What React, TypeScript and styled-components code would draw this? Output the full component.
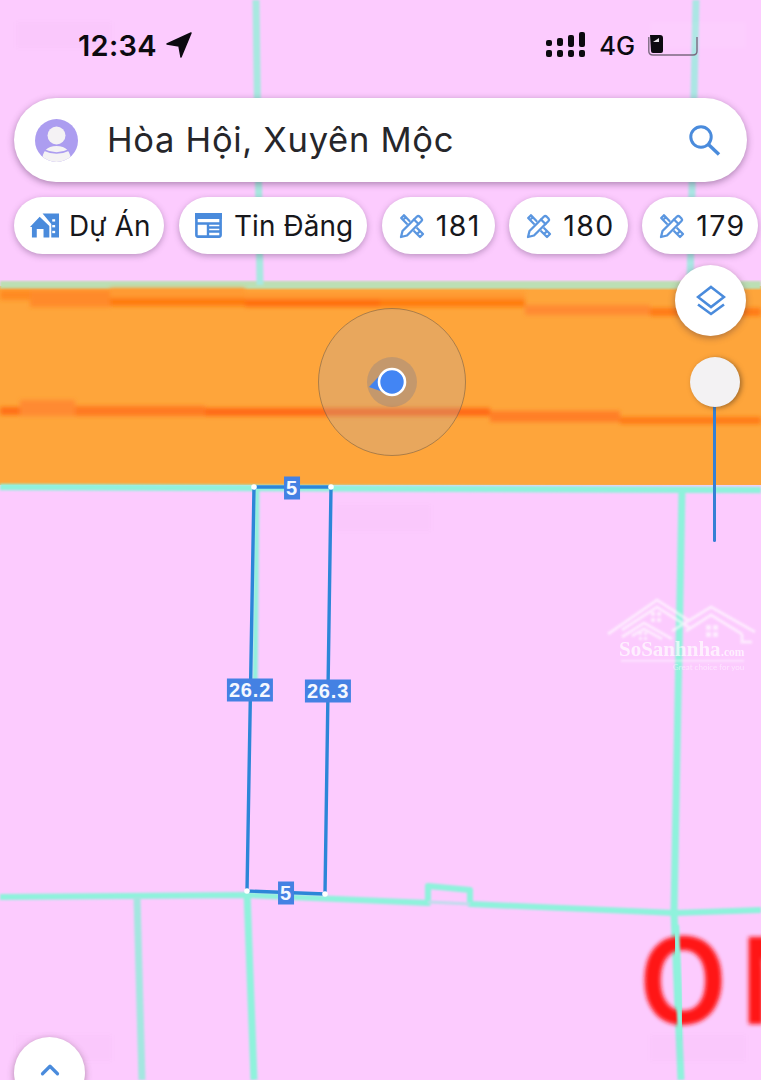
import * as React from 'react';
import styled, { createGlobalStyle } from 'styled-components';
import { ChevronUp } from 'lucide-react';

const BLUE = '#4a8bdc';
const TEAL = '#8ff2dc';

const GlobalStyle = createGlobalStyle`
  html, body {
    margin: 0;
    padding: 0;
    background: #fccbfe;
  }
  body {
    font-family: Inter, "Noto Sans", "Liberation Sans", sans-serif;
  }
`;

const Screen = styled.div`
  position: relative;
  width: 761px;
  height: 1080px;
  overflow: hidden;
  background: #fccbfe;
`;

const MapCanvas = styled.svg`
  position: absolute;
  top: 0;
  left: 0;
  width: 761px;
  height: 1080px;
`;

/** Header stack: status bar, search and chips, in flow above the map. */
const Header = styled.div`
  position: relative;
  display: flex;
  flex-direction: column;
  padding: 0 0 0 14px;
`;

const StatusBar = styled.div`
  display: flex;
  align-items: center;
  justify-content: space-between;
  height: 90px;
  padding: 0 63px 0 64px;
  color: #0c0a10;
`;

const StatusGroup = styled.div<{ $gap: number }>`
  display: flex;
  align-items: center;
  gap: ${props => props.$gap}px;
`;

const Clock = styled.span`
  font-size: 29px;
  font-weight: 600;
  letter-spacing: 0.3px;
`;

const Network = styled.span`
  font-size: 25.5px;
  font-weight: 500;
`;

const SearchBar = styled.div`
  display: flex;
  align-items: center;
  width: 733px;
  height: 84px;
  margin-top: 8px;
  padding: 0 26px 0 21px;
  box-sizing: border-box;
  border-radius: 42px;
  background: #fff;
  box-shadow: 0 2px 7px rgba(70, 40, 80, 0.45);
`;

const SearchText = styled.span`
  flex: 1;
  margin-left: 29px;
  font-size: 34.5px;
  line-height: 40px;
  color: #26262a;
  letter-spacing: 0.7px;
`;

const ChipRow = styled.div`
  display: flex;
  gap: 14.5px;
  margin-top: 15px;
`;

const Chip = styled.div`
  display: flex;
  align-items: center;
  flex: none;
  gap: 10px;
  height: 57px;
  padding: 0 14px 0 16px;
  box-sizing: border-box;
  border-radius: 29px;
  background: #fff;
  color: #17171b;
  font-size: 27.9px;
  letter-spacing: 0.1px;
  box-shadow: 0 2px 6px rgba(70, 40, 80, 0.35);
`;

const WideChip = styled(Chip)`
  gap: 12px;
`;

const ToolChip = styled(Chip)`
  gap: 11px;
  padding: 0 13px 0 17px;
`;

const ChipNumber = styled.span`
  min-width: 46px;
  font-size: 28.5px;
  letter-spacing: 1.4px;
`;

const RoundButton = styled.div<{ $left: number; $top: number }>`
  position: absolute;
  left: ${props => props.$left}px;
  top: ${props => props.$top}px;
  display: flex;
  align-items: center;
  justify-content: center;
  width: 71px;
  height: 71px;
  border-radius: 50%;
  background: #fff;
  box-shadow: 0 2px 7px rgba(80, 50, 60, 0.45);
`;

const SliderTrack = styled.div`
  position: absolute;
  left: 713px;
  top: 400px;
  width: 3px;
  height: 142px;
  border-radius: 2px;
  background: #3580d4;
`;

const SliderKnob = styled.div`
  position: absolute;
  left: 690px;
  top: 357px;
  width: 50px;
  height: 50px;
  border-radius: 50%;
  background: #f3f2f3;
  box-shadow: 2px 1px 5px rgba(90, 60, 30, 0.55);
`;

/** Length tag on a parcel edge, centred on its map point. */
const EdgeLabel = styled.div<{ $x: number; $y: number }>`
  position: absolute;
  left: ${props => props.$x}px;
  top: ${props => props.$y}px;
  transform: translate(-50%, -50%);
  height: 23px;
  padding: 0 2px;
  background: #4481e3;
  color: #f4f8ff;
  font-size: 20px;
  line-height: 23px;
  font-weight: 700;
  font-family: "Liberation Sans", sans-serif;
  letter-spacing: 0.8px;
`;

const Smudge = styled.div<{ $x: number; $y: number; $light?: boolean }>`
  position: absolute;
  left: ${props => props.$x}px;
  top: ${props => props.$y}px;
  width: 96px;
  height: 26px;
  background: ${props => (props.$light ? 'rgba(255,255,255,0.07)' : 'rgba(170,90,170,0.025)')};
  filter: blur(2px);
`;

const WatermarkText = styled.text<{ $serif?: boolean }>`
  fill: #fff;
  font-family: ${props => (props.$serif ? '"Liberation Serif", serif' : 'Lato, sans-serif')};
  font-weight: ${props => (props.$serif ? 700 : 400)};
`;

const BigText = styled.text`
  fill: #ff1418;
  font-family: "Liberation Sans", sans-serif;
  font-weight: 700;
  font-size: 126px;
  letter-spacing: 17px;
`;

const teal = { fill: 'none', stroke: TEAL, strokeLinejoin: 'round' as const };

const MapDrawing: React.FC = () => (
  <MapCanvas viewBox="0 0 761 1080">
    <defs>
      <filter id="soft" x="-5%" y="-50%" width="110%" height="200%">
        <feGaussianBlur stdDeviation="2.2" />
      </filter>
      <filter id="softer">
        <feGaussianBlur stdDeviation="0.9" />
      </filter>
      <filter id="letters">
        <feGaussianBlur stdDeviation="2" />
      </filter>
    </defs>

    {/* road band */}
    <rect x="0" y="286" width="761" height="199" fill="#fea53b" />
    <rect x="0" y="281" width="761" height="8" fill="#bcdfb4" filter="url(#softer)" />
    <g filter="url(#soft)">
      <rect x="0" y="290" width="30" height="10" fill="#ff8a22" />
      <rect x="30" y="290" width="80" height="17" fill="#ff8a2a" />
      <rect x="110" y="288" width="135" height="12" fill="#ff9a30" />
      <rect x="110" y="298" width="135" height="8" fill="#ff7a10" />
      <rect x="245" y="292" width="280" height="9" fill="#ff9a30" />
      <rect x="245" y="299" width="135" height="8" fill="#ff6f10" />
      <rect x="380" y="299" width="145" height="8" fill="#ff7d10" />
      <rect x="525" y="305" width="125" height="10" fill="#ff8a30" />
      <rect x="650" y="308" width="111" height="8" fill="#ff7a18" />

      <rect x="0" y="407" width="20" height="8" fill="#ff7018" />
      <rect x="20" y="400" width="55" height="16" fill="#ff8a30" />
      <rect x="75" y="406" width="130" height="10" fill="#ff7a20" />
      <rect x="205" y="408" width="285" height="8" fill="#ff6a14" />
      <rect x="490" y="411" width="130" height="11" fill="#ff7f28" />
      <rect x="620" y="417" width="141" height="7" fill="#ff7a14" />
    </g>

    {/* parcel boundaries */}
    <g filter="url(#softer)" {...teal}>
      <path d="M256 0 L260 285" strokeWidth="7" stroke="#a8e8e0" />
      <path d="M696 0 L690 285" strokeWidth="7" stroke="#abe6e4" />
      <path d="M0 487 L761 490" strokeWidth="6.5" />
      <path d="M682 490 L674 912 L681 1080" strokeWidth="7" />
      <path d="M0 897 L247 895 L428 903 L428 886 L470 890 L470 904 L675 913 L761 910" strokeWidth="6" />
      <path d="M428 902 L470 904" strokeWidth="3" stroke="#bfdcec" />
      <path d="M137 897 L142 1080" strokeWidth="7" stroke="#a4e6e0" />
      <path d="M247 892 L254 1080" strokeWidth="7" />
      <path d="M257 489 L255 690" strokeWidth="5" />
    </g>

    {/* large map lettering, boundary runs over it */}
    <g filter="url(#letters)">
      <BigText transform="translate(640 1024) scale(0.88 1)">ON</BigText>
    </g>
    <path d="M676 925 L681 1040" stroke={TEAL} strokeWidth="6" fill="none" filter="url(#softer)" />

    {/* watermark */}
    <g opacity="0.62" filter="url(#softer)">
      <g fill="none" stroke="#fff" strokeWidth="3">
        <path d="M608 634 L657 600 L688 620 M622 630 L657 607 L690 628" />
        <path d="M622 637 L644 623 L672 639 M632 636 L644 629 L662 639" />
        <path d="M672 631 L711 607 L755 632 M686 631 L711 615 L742 634" />
        <path d="M742 634 L742 642 L752 642" />
      </g>
      <g fill="#fff">
        <rect x="651" y="612" width="4" height="4" />
        <rect x="657" y="612" width="4" height="4" />
        <rect x="651" y="618" width="4" height="4" />
        <rect x="657" y="618" width="4" height="4" />
        <rect x="706" y="625" width="5" height="5" />
        <rect x="713" y="625" width="5" height="5" />
        <rect x="706" y="632" width="5" height="5" />
        <rect x="713" y="632" width="5" height="5" />
        <rect x="639" y="632" width="3" height="3" />
        <rect x="644" y="632" width="3" height="3" />
        <rect x="639" y="637" width="3" height="3" />
        <rect x="644" y="637" width="3" height="3" />
        <rect x="621" y="660" width="123" height="1.5" />
      </g>
    </g>
    <g opacity="0.7">
      <WatermarkText $serif x="619" y="656" fontSize="21">SoSanhnha</WatermarkText>
      <WatermarkText $serif x="721" y="656" fontSize="11.5">.com</WatermarkText>
      <WatermarkText x="673" y="670" fontSize="8" opacity="0.7">Great choice for you</WatermarkText>
    </g>

    {/* surveyed lot */}
    <path d="M254 487 L331 487 L325 894 L247 891 Z" fill="none" stroke="#2c86d8" strokeWidth="3.4" strokeLinejoin="round" />
    <circle cx="254" cy="487" r="2.8" fill="#fff" />
    <circle cx="331" cy="487" r="2.8" fill="#fff" />
    <circle cx="325" cy="894" r="2.8" fill="#fff" />
    <circle cx="247" cy="891" r="2.8" fill="#fff" />

    {/* current position */}
    <circle cx="392" cy="382" r="73.5" fill="rgba(170,175,195,0.26)" stroke="rgba(90,80,70,0.6)" strokeWidth="0.8" />
    <circle cx="392" cy="382" r="25" fill="rgba(120,120,140,0.32)" />
    <path d="M369 387 L381 374 L386 393 Z" fill="#4283ee" />
    <circle cx="392" cy="382" r="13" fill="#4285f4" stroke="#fff" strokeWidth="2.6" />
  </MapCanvas>
);

const LocationArrow: React.FC = () => (
  <svg width="26" height="26" viewBox="0 0 26 26">
    <path d="M25 1 L1 12 L13 14 L15 25 Z" fill="#0c0a10" stroke="#0c0a10" strokeWidth="1.5" strokeLinejoin="round" />
  </svg>
);

const SignalDots: React.FC = () => (
  <svg width="40" height="28" viewBox="0 0 40 28" fill="#0c0a10">
    <rect x="0" y="9" width="6" height="6" rx="2" />
    <rect x="0" y="19" width="6" height="7" rx="2" />
    <rect x="11" y="7" width="6" height="8" rx="2" />
    <rect x="11" y="19" width="6" height="7" rx="2" />
    <rect x="22" y="4" width="6" height="12" rx="2" />
    <rect x="22" y="19" width="6" height="7" rx="2" />
    <rect x="33" y="1" width="6" height="15" rx="2" />
    <rect x="33" y="19" width="6" height="7" rx="2" />
  </svg>
);

const Battery: React.FC = () => (
  <svg width="50" height="22" viewBox="0 0 50 22">
    <path d="M0.8 3 L0.8 17 Q0.8 21 5 21 L45 21 Q49 21 49 17 L49 3" fill="none" stroke="#7b6a80" strokeWidth="1.4" />
    <path d="M2 1 L3 17 Q3 19 5 19 L13 19 Q15 19 15 17 L15 4 Q15 1 12 1 Z" fill="#0c0a10" />
    <path d="M5 8 L11 4 L11 8 Z" fill="#e8e4ea" />
  </svg>
);

const Avatar: React.FC = () => (
  <svg width="43" height="43" viewBox="0 0 43 43">
    <defs>
      <clipPath id="avatar-clip">
        <circle cx="21.5" cy="21.5" r="21.5" />
      </clipPath>
    </defs>
    <g clipPath="url(#avatar-clip)">
      <rect width="43" height="43" fill="#ac9df0" />
      <circle cx="21.5" cy="16.5" r="9" fill="#f4f2f4" />
      <path d="M7 43 Q7 27 21.5 27 Q36 27 36 43 Z" fill="#f4f2f4" />
      <path d="M9 31 Q21.5 37 34 31" fill="none" stroke="#ac9df0" strokeWidth="1.6" />
    </g>
  </svg>
);

const SearchGlyph: React.FC = () => (
  <svg width="34" height="34" viewBox="0 0 34 34" fill="none" stroke={BLUE}>
    <circle cx="14" cy="14" r="10.2" strokeWidth="3" />
    <path d="M21.5 21.5 L32 31.5" strokeWidth="3.4" />
  </svg>
);

const ProjectIcon: React.FC = () => (
  <svg width="29" height="26" viewBox="0 0 30 26" fill={BLUE}>
    <path d="M0 14 L10 3.5 L20 13 L20 25 L14 25 L14 16 L7 16 L7 25 L2 25 L2 14 Z" />
    <path d="M13 0 L30 0 L30 25 L22 25 L22 11 Z" />
    <g fill="#fff">
      <rect x="23" y="6" width="3" height="2.4" />
      <rect x="23" y="12" width="3" height="2.4" />
      <rect x="23" y="18" width="3" height="2.4" />
    </g>
  </svg>
);

const NewsIcon: React.FC = () => (
  <svg width="27" height="25" viewBox="0 0 27 25" fill="none" stroke={BLUE} strokeWidth="2.6">
    <path d="M0 0 H27 V6 H0 Z" fill={BLUE} stroke="none" />
    <rect x="1.4" y="3" width="24.2" height="20.6" rx="1.5" />
    <path d="M1 10.5 H26 M13 11 V23 M14 14.5 H26 M14 18.5 H26" strokeWidth="2.4" />
  </svg>
);

const ToolsIcon: React.FC = () => (
  <svg width="26" height="26" viewBox="0 0 26 26" fill="none" stroke="#5a96e0" strokeWidth="2.3" strokeLinejoin="round" strokeLinecap="round">
    <path d="M2 24 L3.5 18 L18 3.5 Q19.2 2.4 20.5 3.5 L22.5 5.5 Q23.6 6.8 22.5 8 L8 22.5 Z" />
    <path d="M15 6.5 L19.5 11" />
    <path d="M10.5 8 L5 2.2 L2.2 5 L7.8 10.8 M5.5 5.5 L7 4.2" />
    <path d="M15.2 18.2 L21 24 L24 21 L18.2 15.2 M18.5 20.5 L20 19.2" />
  </svg>
);

const LayersGlyph: React.FC = () => (
  <svg width="30" height="31" viewBox="0 0 30 31" fill="none" stroke={BLUE} strokeWidth="2.6">
    <path d="M15 2 L28 12 L15 22 L2 12 Z" />
    <path d="M2 19.5 L15 29 L28 19.5" />
  </svg>
);

const tools = ['181', '180', '179'];

const App: React.FC = () => (
  <Screen>
    <GlobalStyle />
    <MapDrawing />
    <Smudge $x={16} $y={22} />
    <Smudge $x={650} $y={22} $light />
    <Smudge $x={335} $y={505} />
    <Smudge $x={650} $y={1035} />
    <Smudge $x={16} $y={1035} />

    <Header>
      <StatusBar>
        <StatusGroup $gap={9}>
          <Clock>12:34</Clock>
          <LocationArrow />
        </StatusGroup>
        <StatusGroup $gap={13}>
          <SignalDots />
          <Network>4G</Network>
          <Battery />
        </StatusGroup>
      </StatusBar>
      <SearchBar>
        <Avatar />
        <SearchText>Hòa Hội, Xuyên Mộc</SearchText>
        <SearchGlyph />
      </SearchBar>
      <ChipRow>
        <Chip>
          <ProjectIcon />
          Dự Án
        </Chip>
        <WideChip>
          <NewsIcon />
          Tin Đăng
        </WideChip>
        {tools.map(tool => (
          <ToolChip key={tool}>
            <ToolsIcon />
            <ChipNumber>{tool}</ChipNumber>
          </ToolChip>
        ))}
      </ChipRow>
    </Header>

    <RoundButton $left={675} $top={265}>
      <LayersGlyph />
    </RoundButton>
    <SliderTrack />
    <SliderKnob />

    <EdgeLabel $x={292} $y={488}>5</EdgeLabel>
    <EdgeLabel $x={250} $y={690}>26.2</EdgeLabel>
    <EdgeLabel $x={328} $y={691}>26.3</EdgeLabel>
    <EdgeLabel $x={286} $y={893}>5</EdgeLabel>

    <RoundButton $left={14} $top={1037}>
      <ChevronUp size={30} color={BLUE} strokeWidth={2.6} style={{ marginTop: -6 }} />
    </RoundButton>
  </Screen>
);

export default App;
